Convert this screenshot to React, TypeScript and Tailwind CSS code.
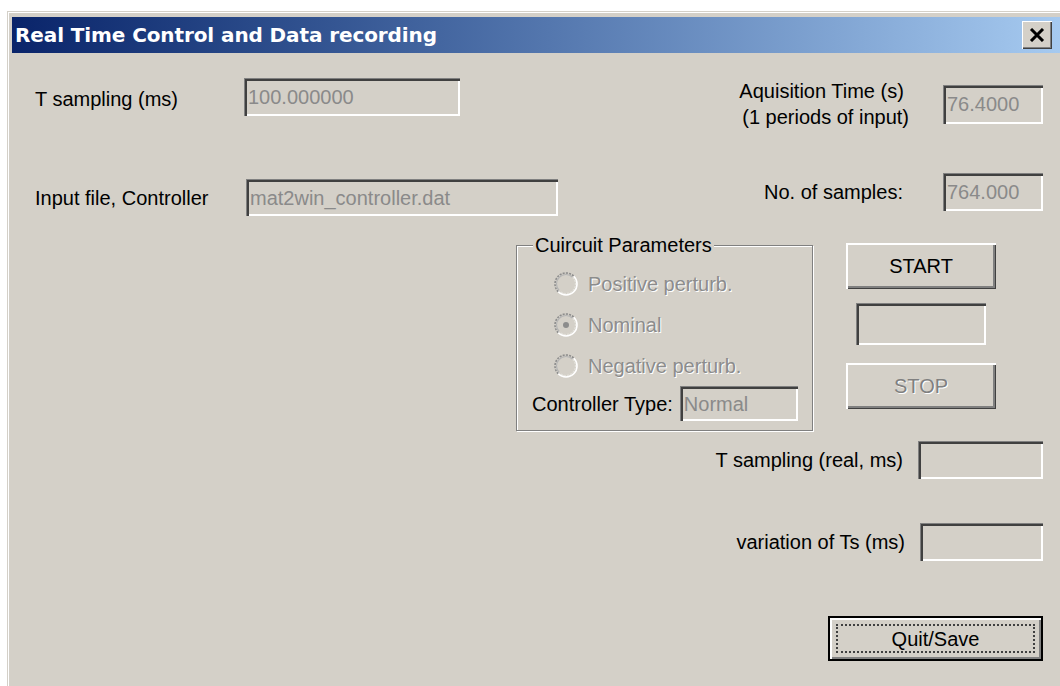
import React from "react";

const ui = "font-['Liberation_Sans',Arial,sans-serif] text-[20px] leading-none";

// sunken edit box, greyed out like a disabled Win32 edit control
function Field({ value = "", className = "" }: { value?: string; className?: string }) {
  return (
    <div
      className={`flex items-center pl-[4px] bg-[#d4d0c8] text-[#8a8a8a] shadow-[inset_1px_1px_0_#808080,inset_3px_3px_0_#404040,inset_-2px_-2px_0_#ffffff] ${className}`}
    >
      {value}
    </div>
  );
}

function Button({ label, disabled = false, className = "" }: { label: string; disabled?: boolean; className?: string }) {
  return (
    <div
      className={`flex items-center justify-center bg-[#d4d0c8] shadow-[inset_2px_2px_0_#ffffff,inset_-1px_-1px_0_#404040,inset_-3px_-3px_0_#808080] ${
        disabled ? "text-[#808080] [text-shadow:1px_1px_0_#ffffff]" : "text-black"
      } ${className}`}
    >
      {label}
    </div>
  );
}

function Radio({ label, checked = false }: { label: string; checked?: boolean }) {
  return (
    <div className="flex items-center gap-[10px]">
      <svg width="24" height="24" viewBox="0 0 24 24" className="shrink-0">
        <circle cx="12" cy="12" r="10" fill="#d4d0c8" />
        <path d="M4.22 19.78 A11 11 0 0 1 19.78 4.22" fill="none" stroke="#8c8c8c" strokeWidth="1.6" strokeDasharray="2 1.2" />
        <path d="M5.28 18.72 A9.5 9.5 0 0 1 18.72 5.28" fill="none" stroke="#b4b4b4" strokeWidth="1.2" />
        <path d="M19.78 4.22 A11 11 0 0 1 4.22 19.78" fill="none" stroke="#ffffff" strokeWidth="1.6" />
        <path d="M18.72 5.28 A9.5 9.5 0 0 1 5.28 18.72" fill="none" stroke="#e4e2dc" strokeWidth="1.2" strokeDasharray="2 1.2" />
        {checked && <circle cx="12" cy="12" r="3" fill="#8c8c8c" />}
      </svg>
      <span className="text-[#8c8c8c] [text-shadow:1px_1px_0_#ffffff]">{label}</span>
    </div>
  );
}

export default function App() {
  return (
    <div className={`w-[1060px] h-[686px] overflow-hidden bg-white ${ui}`}>
      <div className="ml-[7px] mt-[11px] h-[675px] bg-[#d4d0c8] pl-[5px] pt-[6px] shadow-[inset_1px_1px_0_#d4d0c8,inset_2px_2px_0_#ffffff] flex flex-col">
        {/* caption bar */}
        <div className="h-[36px] shrink-0 flex items-center justify-between bg-gradient-to-r from-[#0a246a] to-[#a6caf0] pl-[3px] pr-[8px]">
          <span className="font-['DejaVu_Sans',Tahoma,sans-serif] font-bold text-[20px] text-white tracking-[-0.1px]">
            Real Time Control and Data recording
          </span>
          <div className="w-[30px] h-[28px] flex items-center justify-center bg-[#d4d0c8] shadow-[inset_1px_1px_0_#ffffff,inset_-1px_-1px_0_#404040,inset_-2px_-2px_0_#808080]">
            <svg width="16" height="14" viewBox="0 0 16 14">
              <path d="M2 1 L14 13 M14 1 L2 13" stroke="#000" strokeWidth="3" />
            </svg>
          </div>
        </div>

        {/* dialog body */}
        <div className="flex-1 flex flex-col">
          <div className="flex justify-between pr-[17px]">
            <div className="pl-[23px] pt-[25px] flex flex-col">
              <div className="flex items-center">
                <span className="w-[209px] pt-[4px]">T sampling (ms)</span>
                <Field value="100.000000" className="w-[216px] h-[38px]" />
              </div>
              <div className="flex items-center mt-[63px]">
                <span className="w-[211px]">Input file, Controller</span>
                <Field value="mat2win_controller.dat" className="w-[312px] h-[37px]" />
              </div>
            </div>
            <div className="pt-[25px] flex flex-col items-end">
              <div className="flex items-center">
                <div className="text-center leading-[26px] mr-[34px]">
                  <div>Aquisition Time (s)</div>
                  <div className="pl-[8px]">(1 periods of input)</div>
                </div>
                <Field value="76.4000" className="w-[100px] h-[39px]" />
              </div>
              <div className="flex items-center mt-[43px]">
                <span className="mr-[40px]">No. of samples:</span>
                <Field value="764.000" className="w-[100px] h-[38px]" />
              </div>
            </div>
          </div>

          {/* circuit parameters group and run controls */}
          <div className="flex mt-[27px] pl-[504px]">
            <div className="relative mt-[2px] w-[297px] h-[186px] border border-[#808080] shadow-[1px_1px_0_#ffffff,inset_1px_1px_0_#ffffff] flex flex-col pl-[37px] pt-[26px]">
              <span className="absolute -top-[11px] left-[16px] bg-[#d4d0c8] px-[2px] text-black">Cuircuit Parameters</span>
              <div className="flex flex-col gap-[17px]">
                <Radio label="Positive perturb." />
                <Radio label="Nominal" checked />
                <Radio label="Negative perturb." />
              </div>
              <div className="flex items-center -ml-[22px] mt-[8px]">
                <span className="mr-[7px]">Controller Type:</span>
                <Field value="Normal" className="w-[118px] h-[35px]" />
              </div>
            </div>
            <div className="ml-[33px] flex flex-col items-center">
              <Button label="START" className="w-[150px] h-[46px]" />
              <Field className="w-[130px] h-[42px] mt-[14px]" />
              <Button label="STOP" disabled className="w-[150px] h-[46px] mt-[18px]" />
            </div>
          </div>

          {/* measured timing and exit */}
          <div className="flex flex-col items-end pr-[17px] mt-[10px]">
            <div className="flex items-center">
              <span className="mr-[15px]">T sampling (real, ms)</span>
              <Field className="w-[125px] h-[38px]" />
            </div>
            <div className="flex items-center mt-[44px]">
              <span className="mr-[15px]">variation of Ts (ms)</span>
              <Field className="w-[123px] h-[38px]" />
            </div>
            <div className="mt-[55px] w-[215px] h-[45px] bg-black p-[2px]">
              <div className="w-full h-full flex bg-[#d4d0c8] shadow-[inset_2px_2px_0_#ffffff,inset_-2px_-2px_0_#808080] p-[6px]">
                <div className="flex-1 flex items-center justify-center border-2 border-dotted border-[#404040]">
                  Quit/Save
                </div>
              </div>
            </div>
          </div>
        </div>
      </div>
    </div>
  );
}
